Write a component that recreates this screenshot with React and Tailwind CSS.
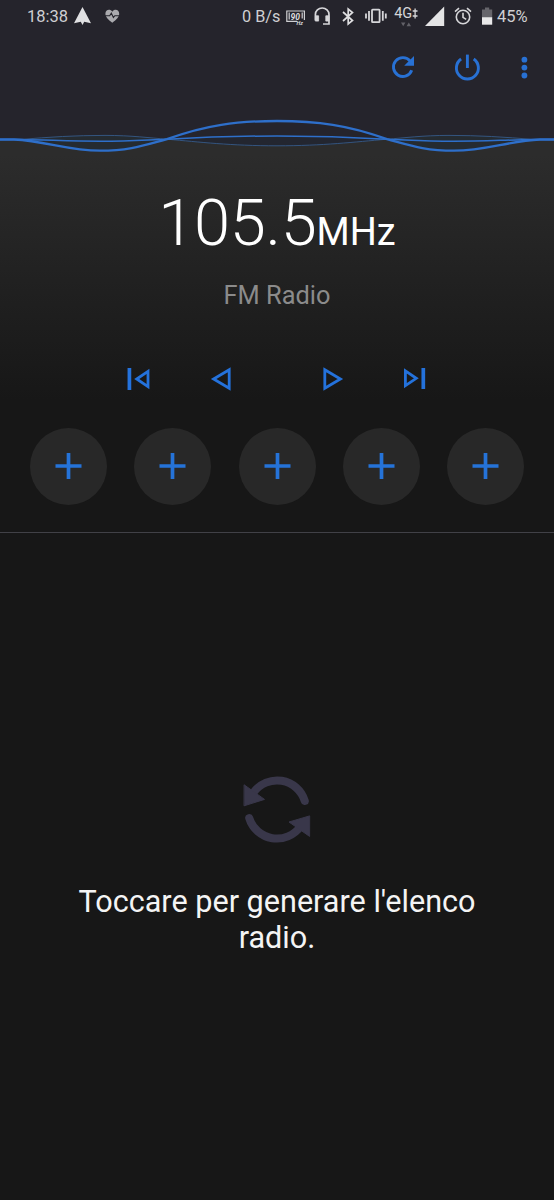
import { useState } from "react";

const PRESETS = [1, 2, 3, 4, 5];

function StatusBar() {
  return (
    <div className="flex h-[34px] items-center text-[#cfcfd2] text-base leading-none whitespace-nowrap">
      <span className="ml-[27px] w-[47px] text-[16.5px]">18:38</span>
      <svg className="w-[18px] h-[34px]" viewBox="74 0 18 34" fill="#e0e0e2">
        <path d="M82.5 7 L91 23.3 L84.2 21.8 L82.5 25 L80.8 21.8 L74 23.3 Z" />
      </svg>
      <svg className="ml-[13px] w-[16px] h-[34px]" viewBox="105 0 16 34">
        <path d="M112.3 22.8 C108 19.3 105.4 16.8 105.4 13.7 C105.4 9.4 110.2 8.6 112.3 11.7 C114.4 8.6 119.2 9.4 119.2 13.7 C119.2 16.8 116.6 19.3 112.3 22.8 Z" fill="#aaaaae" />
        <path d="M105 15.7 h4.7 l1.6 -2.5 l2.1 4.3 l1.4 -1.8 h4.7" fill="none" stroke="#25242c" strokeWidth="1.1" />
      </svg>
      <span className="ml-[121px] w-[44px] text-[16.3px]">0 B/s</span>
      <svg className="w-[22px] h-[34px]" viewBox="286 0 22 34" fill="none" stroke="#cfcfd2">
        <path d="M297 21.3 H286.8 V11 H304.4 V20" strokeWidth="1.2" />
        <path d="M289.2 12.5 v7 M302.2 12.5 v6" strokeWidth="1.2" />
        <text x="290.6" y="19.5" fontSize="8.5" fontWeight="700" fontStyle="italic" fill="#dcdcde" stroke="none">90</text>
        <text x="296.5" y="24.6" fontSize="5.5" fontWeight="700" fontStyle="italic" fill="#dcdcde" stroke="none">Hz</text>
      </svg>
      <svg className="ml-[6px] w-[18px] h-[34px]" viewBox="314 0 18 34" fill="none" stroke="#d6d6d9" strokeWidth="1.7">
        <path d="M315.4 20.5 V14.5 A6.8 6.5 0 0 1 329 14.5 V24 H323" />
        <path d="M315.4 15.8 h3.2 v5.3 h-3.2 z M325.8 15.8 h3.2 v5.3 h-3.2 z" fill="#d6d6d9" strokeWidth="0.8" />
      </svg>
      <svg className="ml-[9px] w-[16px] h-[34px]" viewBox="341 0 16 34" fill="none" stroke="#dedee0" strokeWidth="1.7">
        <path d="M343 12 L352.5 20.5 L348.2 24 V9 L352.5 12.5 L343 21" />
      </svg>
      <svg className="ml-[7px] w-[24px] h-[34px]" viewBox="364 0 24 34" fill="none" stroke="#d6d6d9" strokeWidth="1.8">
        <rect x="372" y="9.6" width="7.6" height="12.6" rx="0.6" />
        <path d="M369 11 v9.8 M382.8 11 v9.8 M366 13.4 v5 M385.8 13.4 v5" />
      </svg>
      <svg className="ml-[6px] w-[24px] h-[34px]" viewBox="394 0 24 34">
        <text x="394.2" y="18.2" fontSize="14" fill="#d6d6d9" textLength="18" lengthAdjust="spacingAndGlyphs">4G</text>
        <path d="M412.7 11 h4.8 M415.1 8.6 v4.8 M412.7 16 h4.8 M415.1 13.6 v4.8" stroke="#d6d6d9" strokeWidth="1.3" />
        <path d="M401 22.6 h4.4 l-2.2 3.6 z M406.6 26.2 h4.4 l-2.2 -3.6 z" fill="#626168" />
      </svg>
      <svg className="ml-[7px] w-[20px] h-[34px]" viewBox="425 0 20 34" fill="#e4e4e5">
        <path d="M444.2 6.5 V26 H425 Z" />
      </svg>
      <svg className="ml-[9px] w-[19px] h-[34px]" viewBox="454 0 19 34" fill="none" stroke="#d6d6d9" strokeWidth="1.6">
        <circle cx="463" cy="17" r="6.7" />
        <path d="M463 12.8 v4.6 l3.2 2" />
        <path d="M455 11.7 l4 -3.5 M471 11.7 l-4 -3.5" />
      </svg>
      <svg className="ml-[9px] w-[12px] h-[34px]" viewBox="482 0 12 34">
        <path d="M482 9.5 h3 v-2 h4.2 v2 h3 v8 h-10.2 z" fill="#66656b" />
        <path d="M482 17.2 h10.2 v7.5 h-10.2 z" fill="#e8e8e9" />
      </svg>
      <span className="ml-[3px] text-[16.5px]">45%</span>
    </div>
  );
}

function Toolbar() {
  return (
    <div className="flex h-[66px] justify-end">
      <svg className="w-[34px] h-[66px]" viewBox="386 34 34 66" fill="none" stroke="#2871d4" strokeWidth="2.9">
        <path d="M411.7 70.2 A9.4 9.4 0 1 1 410.2 61.2" />
        <path d="M414 56 V65.8 H404.2 Z" fill="#2871d4" stroke="none" />
      </svg>
      <svg className="ml-[30px] w-[34px] h-[66px]" viewBox="450 34 34 66" fill="none" stroke="#2871d4" strokeWidth="2.9">
        <path d="M467.4 54.6 V68" />
        <path d="M461.1 59 A11 11 0 1 0 473.7 59" />
      </svg>
      <svg className="ml-[30px] mr-[20px] w-[20px] h-[66px]" viewBox="514 34 20 66" fill="#2871d4">
        <circle cx="524.4" cy="59.7" r="2.9" />
        <circle cx="524.4" cy="67.6" r="2.9" />
        <circle cx="524.4" cy="75.5" r="2.9" />
      </svg>
    </div>
  );
}

function Wave() {
  return (
    <svg className="block w-full h-[55px]" viewBox="0 100 554 55" fill="none" stroke="#2e6fca">
      <path d="M0 139.5 H20 C50 141 70 150.7 100 150.7 C130 150.7 150 142 167 139.2 C200 142 230 146 277 146 C324 146 354 142 387 139.2 C404 142 424 150.7 454 150.7 C484 150.7 504 141 534 139.5 H554 V155 H0 Z" fill="#2c2c2c" stroke="none" />
      <path d="M20 139.5 C50 137 75 135.4 105 135.4 C132 135.4 150 138 167 139.2 C150 142 130 150.7 100 150.7 C70 150.7 50 141 20 139.5 Z" fill="#252b31" stroke="none" />
      <path d="M534 139.5 C504 137 479 135.4 449 135.4 C422 135.4 404 138 387 139.2 C404 142 424 150.7 454 150.7 C484 150.7 504 141 534 139.5 Z" fill="#252b31" stroke="none" />
      <path d="M167 139.2 C200 142 230 146 277 146 C324 146 354 142 387 139.2 C349 137 317 136 277 136 C237 136 205 137 167 139.2 Z" fill="#232630" stroke="none" />
      <path d="M0 139.5 H20 C50 137 75 135.4 105 135.4 C132 135.4 150 138 167 139.2 C200 142 230 145.8 277 145.8 C324 145.8 354 142 387 139.2 C404 138 422 135.4 449 135.4 C479 135.4 504 137 534 139.5 H554" strokeWidth="0.9" stroke="#355a89" />
      <path d="M0 139.5 H20 C50 140 70 141.3 100 141.3 C130 141.3 145 140 167 139.2 C205 137 237 136 277 136 C317 136 349 137 387 139.2 C409 140 424 141.3 454 141.3 C484 141.3 504 140 534 139.5 H554" strokeWidth="1.5" />
      <path d="M0 139.5 H14 C46 141 68 150.7 100 150.7 C130 150.7 145 145 167 139.2 C205 125 237 121 277 121 C317 121 349 125 387 139.2 C409 145 424 150.7 454 150.7 C486 150.7 508 141 540 139.5 H554" strokeWidth="2.3" />
    </svg>
  );
}

function TuneControls() {
  return (
    <div className="mt-[40px] flex h-[60px] items-center pl-[126px] pr-[126px] justify-between">
      <svg className="w-[26px] h-[60px]" viewBox="126 350 26 60" fill="none" stroke="#2472dc" strokeWidth="2.8">
        <path d="M129.4 368 V390" strokeWidth="3.7" />
        <path d="M148 371.4 V386.6 L136.7 379 Z" />
      </svg>
      <svg className="ml-[57px] w-[22px] h-[60px]" viewBox="210 350 22 60" fill="none" stroke="#2472dc" strokeWidth="2.8">
        <path d="M229.2 369.8 V388.2 L213.6 379 Z" />
      </svg>
      <svg className="ml-[88px] w-[22px] h-[60px]" viewBox="322 350 22 60" fill="none" stroke="#2472dc" strokeWidth="2.8">
        <path d="M324.8 369.8 V388.2 L340.4 379 Z" />
      </svg>
      <svg className="ml-[57px] w-[26px] h-[60px]" viewBox="402 350 26 60" fill="none" stroke="#2472dc" strokeWidth="2.8">
        <path d="M423.3 368 V389" strokeWidth="3.7" />
        <path d="M405.4 370.9 V385.7 L416.3 378.3 Z" />
      </svg>
    </div>
  );
}

function Preset({ saved, onSave }) {
  return (
    <button onClick={onSave} aria-pressed={saved} className="flex size-[77px] items-center justify-center rounded-full bg-[#282828]">
      <svg className="size-[27px]" viewBox="0 0 27 27" stroke="#2573d8" strokeWidth="3.7">
        <path d="M13.5 0 V26 M0.5 13 H26.5" />
      </svg>
    </button>
  );
}

export default function App() {
  const [saved, setSaved] = useState([]);

  return (
    <div className="flex h-[1200px] w-[554px] flex-col overflow-hidden bg-[#171717] font-['Roboto',sans-serif]">
      <header className="bg-[#25242c]">
        <StatusBar />
        <Toolbar />
        <Wave />
      </header>

      <section className="h-[377px] bg-linear-to-b from-[#2c2c2c] to-[#171717] to-[245px]">
        <div className="flex h-[107px] items-baseline justify-center pt-[30px] text-white">
          <span className="text-[65px] leading-[76px] font-light tracking-[-0.3px]">105.5</span>
          <span className="text-[38px]">MHz</span>
        </div>
        <p className="mt-[18px] text-center text-[25.4px] leading-[30px] text-[#8b8b8b]">FM Radio</p>
        <TuneControls />
        <div className="mt-[18px] flex justify-between px-[30px]">
          {PRESETS.map((p) => (
            <Preset key={p} saved={saved.includes(p)} onSave={() => setSaved([...saved, p])} />
          ))}
        </div>
      </section>

      <main className="flex flex-1 flex-col items-center border-t-[1.5px] border-[#414147]">
        <svg className="mt-[237px] w-[80px] h-[80px]" viewBox="237 770 80 80" fill="none" stroke="#39374a" strokeWidth="8" strokeLinecap="round">
          <path d="M304.8 801 A29 29 0 0 0 253.5 792.5" />
          <path d="M249.2 818 A29 29 0 0 0 300.5 826.5" />
          <path d="M244.4 785 L264.5 799.4 L244.4 805.7 Z M309.3 816 L289 822 L309.3 836.2 Z" fill="#39374a" stroke="#39374a" strokeWidth="1" strokeLinejoin="round" />
        </svg>
        <p className="mt-[34px] w-[420px] text-center text-[30.6px] leading-[36px] text-[#f4f4f4]">
          Toccare per generare l'elenco radio.
        </p>
      </main>
    </div>
  );
}
